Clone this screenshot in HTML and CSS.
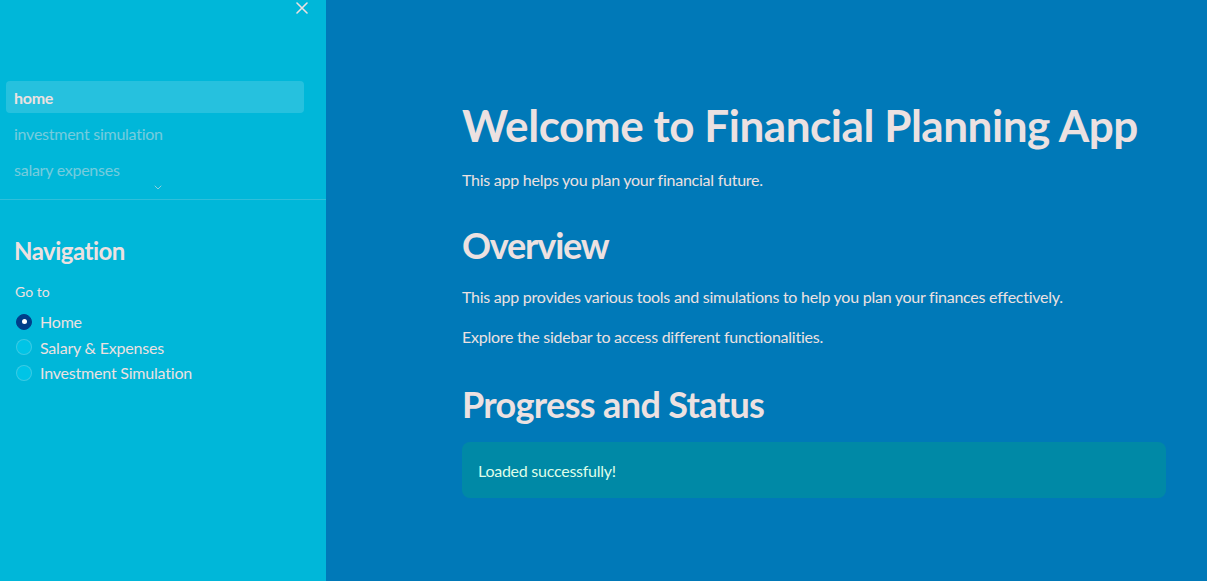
FILE: index.html
```html
<!DOCTYPE html>
<html lang="en">
<head>
<meta charset="utf-8">
<title>Financial Planning App</title>
<link rel="stylesheet" href="styles.css">
</head>
<body>
<aside class="sidebar">
  <div class="sb-header">
    <button class="close-btn" aria-label="Close sidebar">
      <svg width="12" height="12" viewBox="0 0 12 12"><path d="M1 1 L11 11 M11 1 L1 11" stroke="currentColor" stroke-width="1.6" stroke-linecap="round"/></svg>
    </button>
  </div>
  <nav class="page-nav">
    <a class="nav-item active">home</a>
    <a class="nav-item">investment simulation</a>
    <a class="nav-item">salary expenses</a>
    <div class="nav-more">
      <svg width="8" height="5" viewBox="0 0 8 5"><path d="M1 1 L4 4 L7 1" fill="none" stroke="currentColor" stroke-width="1" stroke-linecap="round"/></svg>
    </div>
  </nav>
  <div class="sb-content">
    <h2 class="sb-title">Navigation</h2>
    <div class="radio-label">Go to</div>
    <div class="radio-group">
      <label class="radio"><span class="dot checked"></span>Home</label>
      <label class="radio"><span class="dot"></span>Salary &amp; Expenses</label>
      <label class="radio"><span class="dot"></span>Investment Simulation</label>
    </div>
  </div>
</aside>
<main class="main">
  <div class="block">
    <h1 class="title">Welcome to Financial Planning App</h1>
    <p class="text first">This app helps you plan your financial future.</p>
    <h2 class="heading overview">Overview</h2>
    <p class="text">This app provides various tools and simulations to help you plan your finances effectively.</p>
    <p class="text">Explore the sidebar to access different functionalities.</p>
    <h2 class="heading progress">Progress and Status</h2>
    <div class="alert">Loaded successfully!</div>
  </div>
</main>
</body>
</html>
```
FILE: styles.css
```css
* { box-sizing: border-box; }
html, body { margin: 0; padding: 0; height: 100%; }
body {
  display: flex;
  font-family: "Lato", "Noto Sans", sans-serif;
  color: #ece1e1;
  overflow: hidden;
}
.sidebar {
  width: 326px;
  flex: 0 0 326px;
  height: 100%;
  background: #00b7d9;
  display: flex;
  flex-direction: column;
}
.sb-header {
  height: 81px;
  display: flex;
  justify-content: flex-end;
  align-items: flex-start;
  padding: 2px 18px 0 0;
}
.close-btn {
  background: none;
  border: 0;
  padding: 0;
  width: 12px;
  height: 12px;
  color: #ece1e1;
  display: flex;
}
.page-nav {
  display: flex;
  flex-direction: column;
  gap: 4px;
  padding: 0 22px 0 6px;
  border-bottom: 1px solid rgba(236, 225, 225, 0.2);
  height: 119px;
}
.nav-item {
  height: 32px;
  display: flex;
  align-items: center;
  padding-left: 8px;
  border-radius: 4px;
  font-size: 16px;
  letter-spacing: -0.25px;
  color: rgba(236, 225, 225, 0.5);
}
.nav-item.active {
  background: rgba(255, 255, 255, 0.15);
  color: #ece1e1;
  font-weight: 700;
}
.nav-more {
  display: flex;
  justify-content: center;
  padding-left: 6px;
  margin-top: -4px;
  color: rgba(236, 225, 225, 0.6);
}
.sb-content {
  padding: 0 15px;
}
.sb-title {
  margin: 36px 0 0;
  font-size: 24px;
  line-height: 30px;
  font-weight: 700;
  letter-spacing: -0.5px;
  margin-left: -1px;
}
.radio-label {
  margin-top: 16px;
  font-size: 14px;
  line-height: 20px;
}
.radio-group {
  margin-top: 7px;
  display: flex;
  flex-direction: column;
}
.radio {
  display: flex;
  align-items: center;
  gap: 8px;
  height: 25.5px;
  font-size: 16px;
  letter-spacing: -0.2px;
  padding-left: 1px;
}
.dot {
  width: 16px;
  height: 16px;
  border-radius: 50%;
  background: #00c4e6;
  border: 1px solid rgba(236, 225, 225, 0.25);
  position: relative;
}
.dot.checked {
  background: #003e8a;
  border-color: #003e8a;
}
.dot.checked::after {
  content: "";
  position: absolute;
  left: 4.5px;
  top: 4.5px;
  width: 5px;
  height: 5px;
  border-radius: 50%;
  background: #ffffff;
}
.main {
  flex: 1;
  height: 100%;
  background: #0079b8;
  padding: 99px 41px 0 136px;
}
.block { width: 704px; }
.title {
  margin: 0;
  font-size: 44px;
  line-height: 52px;
  font-weight: 700;
  letter-spacing: -0.45px;
}
.text {
  margin: 16px 0 0;
  font-size: 16px;
  line-height: 24px;
  letter-spacing: -0.25px;
}
.text.first { margin-top: 17px; }
.heading {
  margin: 32px 0 0;
  font-size: 36px;
  line-height: 43px;
  font-weight: 700;
  letter-spacing: -0.65px;
}
.heading.overview { letter-spacing: -1.2px; }
.heading + .text { margin-top: 18px; }
.heading.progress { margin-top: 34px; }
.alert {
  margin-top: 16px;
  height: 56px;
  border-radius: 8px;
  background: #0089a6;
  color: #dffde9;
  font-size: 16px;
  letter-spacing: -0.25px;
  display: flex;
  align-items: center;
  padding: 0 16px;
}
```
